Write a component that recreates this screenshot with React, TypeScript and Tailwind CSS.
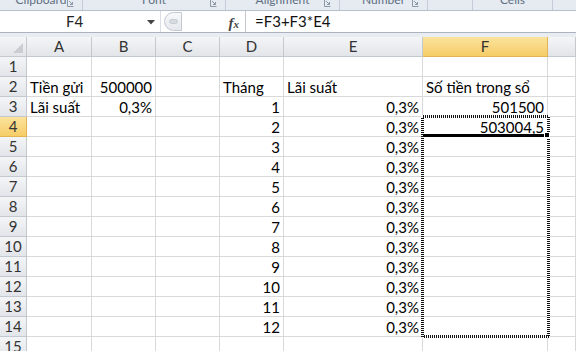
import React from "react";

const COLS = ["A", "B", "C", "D", "E", "F", "G"];

type Cell = { t: string; r?: boolean };
const data: Record<number, Record<string, Cell>> = {
  2: {
    A: { t: "Tiền gửi" },
    B: { t: "500000", r: true },
    D: { t: "Tháng" },
    E: { t: "Lãi suất" },
    F: { t: "Số tiền trong sổ" },
  },
  3: {
    A: { t: "Lãi suất" },
    B: { t: "0,3%", r: true },
    D: { t: "1", r: true },
    E: { t: "0,3%", r: true },
    F: { t: "501500", r: true },
  },
  4: { D: { t: "2", r: true }, E: { t: "0,3%", r: true }, F: { t: "503004,5", r: true } },
};
for (let i = 5; i <= 14; i++) {
  data[i] = { D: { t: String(i - 2), r: true }, E: { t: "0,3%", r: true } };
}

const groups = [
  { w: "w-[83px]", label: "Clipboard", launcher: true },
  { w: "w-[143px]", label: "Font", launcher: true },
  { w: "w-[114px]", label: "Alignment", launcher: true },
  { w: "w-[88px]", label: "Number", launcher: true },
  { w: "w-[45px]", label: "", launcher: false },
  { w: "w-[80px]", label: "Cells", launcher: false },
];

function Launcher() {
  return (
    <svg width="7" height="7" viewBox="0 0 7 7" className="absolute right-[8px] top-0">
      <path d="M0.5 0 V6.5 H6.5" fill="none" stroke="#8c98a6" strokeWidth="1" />
      <path d="M2 1 L5.5 4.5 M5.5 2 V4.5 H3" fill="none" stroke="#8c98a6" strokeWidth="1" />
    </svg>
  );
}

export default function App() {
  return (
    <div
      className="w-[576px] h-[351px] overflow-hidden bg-white relative"
      style={{ fontFamily: "Lato, 'Noto Sans', 'Liberation Sans', sans-serif" }}
    >
      {/* ribbon remnants */}
      <div className="h-[11px] flex bg-[#e6ebf2] border-b border-[#b6c0cc] overflow-hidden">
        {groups.map((g, i) => (
          <div key={i} className={`${g.w} shrink-0 relative border-r border-[#c3ccd7] overflow-hidden`}>
            <div className="text-[12px] leading-[14px] text-[#5f6f82] text-center -mt-[7px]">{g.label}</div>
            {g.launcher && <Launcher />}
          </div>
        ))}
        <div className="flex-1" />
      </div>

      {/* formula bar */}
      <div className="h-[22px] flex bg-white border-b border-[#a9b4c0]">
        <div className="w-[158px] ml-[3px] relative flex items-center justify-center border-r border-[#dbe0e6]">
          <span className="text-[15px] text-[#222] -ml-[14px]">F4</span>
          <svg width="8" height="5" viewBox="0 0 8 5" className="absolute right-[5px] top-[9px]">
            <path d="M0 0 H8 L4 4.5 Z" fill="#444" />
          </svg>
        </div>
        <div className="w-[84px] flex items-center relative">
          <div className="ml-[3px] w-[18px] h-[19px] rounded-l-full border border-[#c3c9d1] bg-gradient-to-b from-[#f8f9fb] to-[#e4e8ec] flex items-center justify-center">
            <div className="w-[9px] h-[5px] rounded-full bg-[#d6dbe1] border border-[#c6ccd3]" />
          </div>
          <span
            className="absolute right-[6px] top-[1px] text-[15px] italic font-bold text-[#444]"
            style={{ fontFamily: "'Liberation Serif', 'DejaVu Serif', serif" }}
          >
            f<span className="text-[11px]">x</span>
          </span>
        </div>
        <div className="flex-1 border-l border-[#c3c9d1] flex items-center pl-[9px] text-[15px] text-[#111]">
          =F3+F3*E4
        </div>
      </div>

      <div className="h-[4px] bg-[#e9edf2]" />

      {/* grid */}
      <div className="relative">
        <div className="grid grid-cols-[27px_65px_64px_64px_64px_139px_125px_1fr]">
          {/* header row */}
          <div className="h-[20px] border-r border-b border-[#c4c9d0] bg-gradient-to-b from-[#f4f5f7] to-[#e2e5e9] relative">
            <svg width="10" height="10" viewBox="0 0 10 10" className="absolute right-[3px] bottom-[3px]">
              <path d="M10 0 V10 H0 Z" fill="#c9cdd3" />
            </svg>
          </div>
          {COLS.map((c) => (
            <div
              key={c}
              className={
                c === "F"
                  ? "h-[20px] border-r border-b border-[#e2b453] bg-gradient-to-b from-[#fbe39c] to-[#f6cd66] flex items-center justify-center text-[15px] text-[#333]"
                  : "h-[20px] border-r border-b border-[#c4c9d0] bg-gradient-to-b from-[#f4f5f7] to-[#e2e5e9] flex items-center justify-center text-[15px] text-[#333]"
              }
            >
              {c === "G" ? "" : c}
            </div>
          ))}

          {Array.from({ length: 15 }, (_, i) => i + 1).map((r) => (
            <React.Fragment key={r}>
              <div
                className={
                  r === 4
                    ? "h-[20px] border-r border-b border-[#e2b453] bg-gradient-to-b from-[#fbe39c] to-[#f6cd66] flex items-center justify-center text-[15px] text-[#333]"
                    : "h-[20px] border-r border-b border-[#c4c9d0] bg-gradient-to-b from-[#f4f5f7] to-[#e2e5e9] flex items-center justify-center text-[15px] text-[#333]"
                }
              >
                {r}
              </div>
              {COLS.map((c) => {
                const cell = data[r]?.[c];
                return (
                  <div
                    key={c}
                    className={
                      cell?.r
                        ? "h-[20px] border-r border-b border-[#d9d9d9] flex items-end justify-end pr-[3px] text-[15px] leading-[18px] text-black whitespace-nowrap"
                        : "h-[20px] border-r border-b border-[#d9d9d9] flex items-end justify-start pl-[3px] text-[15px] leading-[18px] text-black whitespace-nowrap"
                    }
                  >
                    {cell?.t ?? ""}
                  </div>
                );
              })}
            </React.Fragment>
          ))}
        </div>

        {/* copy marquee around F4:F14 */}
        <svg
          className="absolute left-[421px] top-[78px] pointer-events-none"
          width="129"
          height="223"
          viewBox="0 0 129 223"
          shapeRendering="crispEdges"
        >
          <rect x="1.5" y="1.5" width="126" height="220" fill="none" stroke="#ffffff" strokeWidth="3" />
          <rect
            x="1.5"
            y="1.5"
            width="126"
            height="220"
            fill="none"
            stroke="#111"
            strokeWidth="3"
            strokeDasharray="1 1"
          />
        </svg>
        {/* active cell thick bottom border */}
        <div className="absolute left-[423px] top-[97px] w-[124px] h-[3px] bg-black" />
        <div className="absolute left-[544px] top-[95px] w-[6px] h-[6px] bg-black border border-white" />
      </div>
    </div>
  );
}
